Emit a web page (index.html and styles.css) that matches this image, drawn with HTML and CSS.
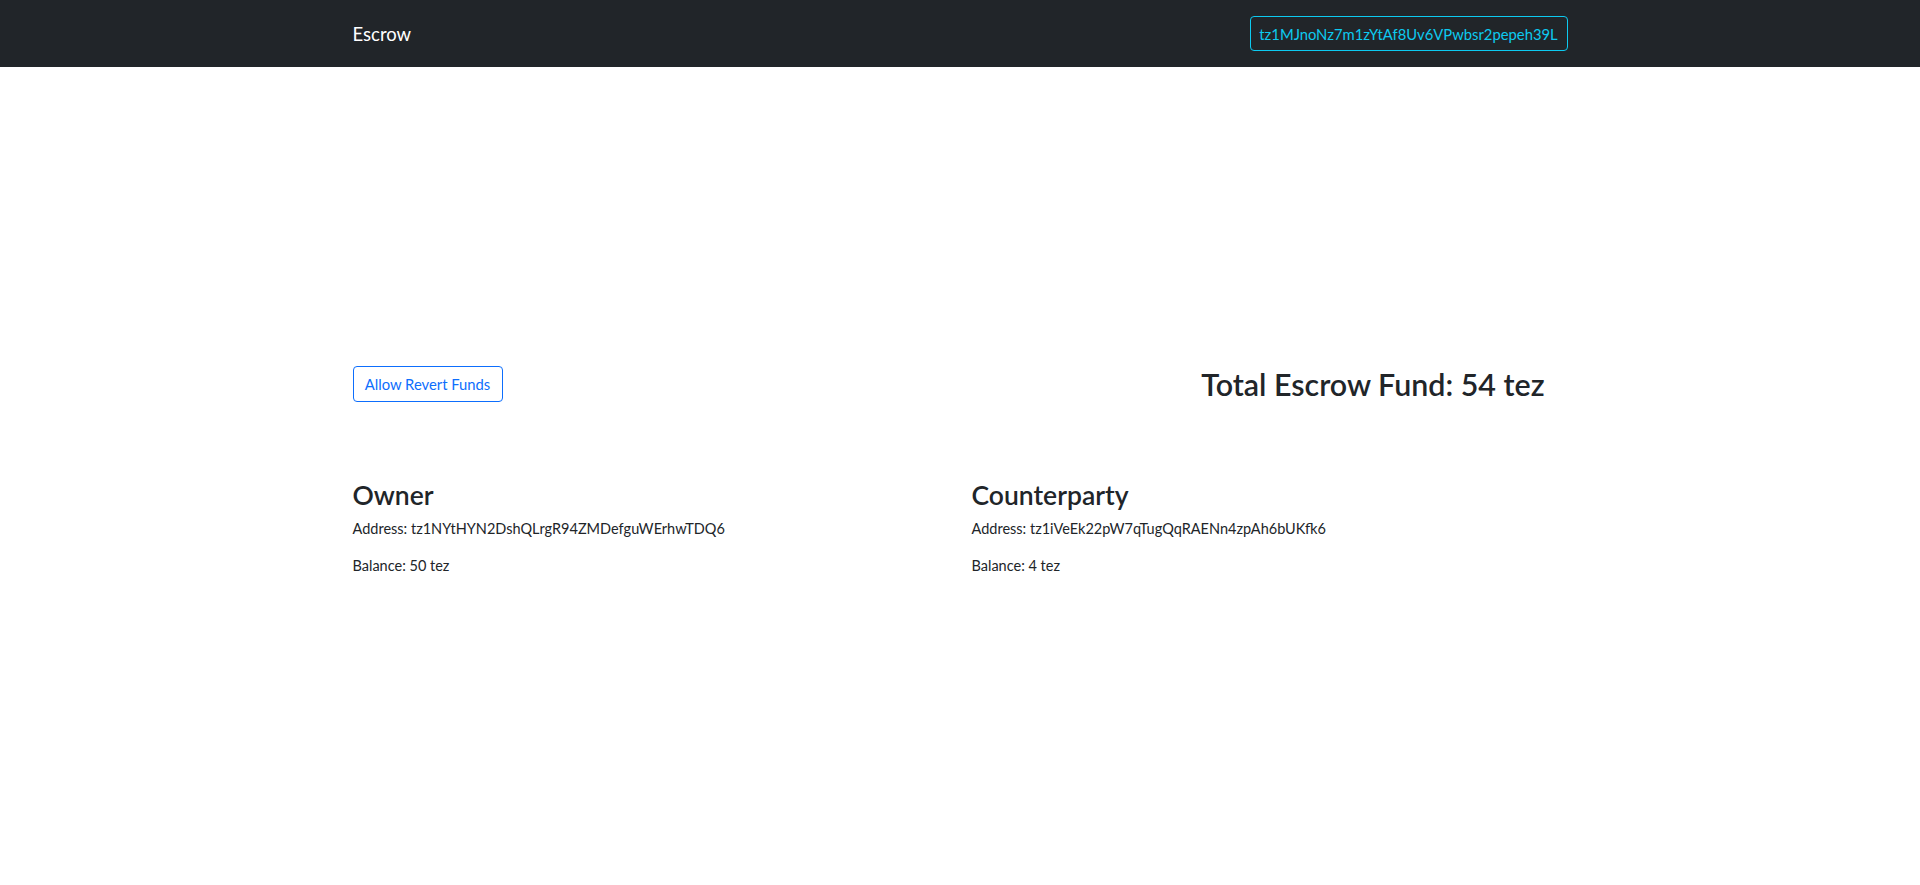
FILE: index.html
```html
<!DOCTYPE html>
<html lang="en">
<head>
<meta charset="utf-8">
<title>Escrow</title>
<link rel="stylesheet" href="styles.css">
</head>
<body>
<nav class="navbar">
  <div class="container nav-inner">
    <span class="brand">Escrow</span>
    <button class="btn btn-info">tz1MJnoNz7m1zYtAf8Uv6VPwbsr2pepeh39L</button>
  </div>
</nav>
<main class="container main">
  <div class="top-row">
    <button class="btn btn-primary">Allow Revert Funds</button>
    <h2 class="total">Total Escrow Fund: 54 tez</h2>
  </div>
  <div class="parties">
    <section class="party">
      <h3>Owner</h3>
      <p>Address: tz1NYtHYN2DshQLrgR94ZMDefguWErhwTDQ6</p>
      <p>Balance: 50 tez</p>
    </section>
    <section class="party">
      <h3>Counterparty</h3>
      <p>Address: tz1iVeEk22pW7qTugQqRAENn4zpAh6bUKfk6</p>
      <p>Balance: 4 tez</p>
    </section>
  </div>
</main>
</body>
</html>
```
FILE: styles.css
```css
* { box-sizing: border-box; }
html, body { margin: 0; padding: 0; }
body {
  font-family: Lato, "Open Sans", sans-serif;
  color: #212529;
  background: #fff;
  font-size: 16px;
}
.container {
  width: 1215px;
  margin: 0 auto;
}
.navbar {
  background: #212529;
  height: 67px;
}
.nav-inner {
  height: 67px;
  display: flex;
  align-items: center;
  justify-content: space-between;
}
.brand {
  color: #fff;
  font-size: 18.5px;
  line-height: 30px;
}
.btn {
  font-family: inherit;
  font-size: 14.8px;
  line-height: 24px;
  background: transparent;
  border: 1px solid;
  border-radius: 4px;
  cursor: pointer;
  white-space: nowrap;
}
.btn-info {
  color: #0dcaf0;
  border-color: #0dcaf0;
  width: 318px;
  height: 35px;
  padding: 0;
}
.btn-primary {
  color: #0d6efd;
  border-color: #0d6efd;
  width: 150px;
  height: 36px;
  padding: 0;
}
.main {
  padding-top: 299px;
}
.top-row {
  display: flex;
  align-items: center;
  justify-content: space-between;
}
.total {
  margin: 0 23px 0 0;
  font-size: 30.4px;
  font-weight: 600;
  line-height: 36px;
}
.parties {
  display: grid;
  grid-template-columns: 619px 1fr;
  margin-top: 77px;
}
.party h3 {
  margin: 0 0 6px;
  font-size: 26.5px;
  font-weight: 600;
  line-height: 33px;
}
.party p {
  margin: 0 0 15px;
  font-size: 14.5px;
  line-height: 22px;
}
```
